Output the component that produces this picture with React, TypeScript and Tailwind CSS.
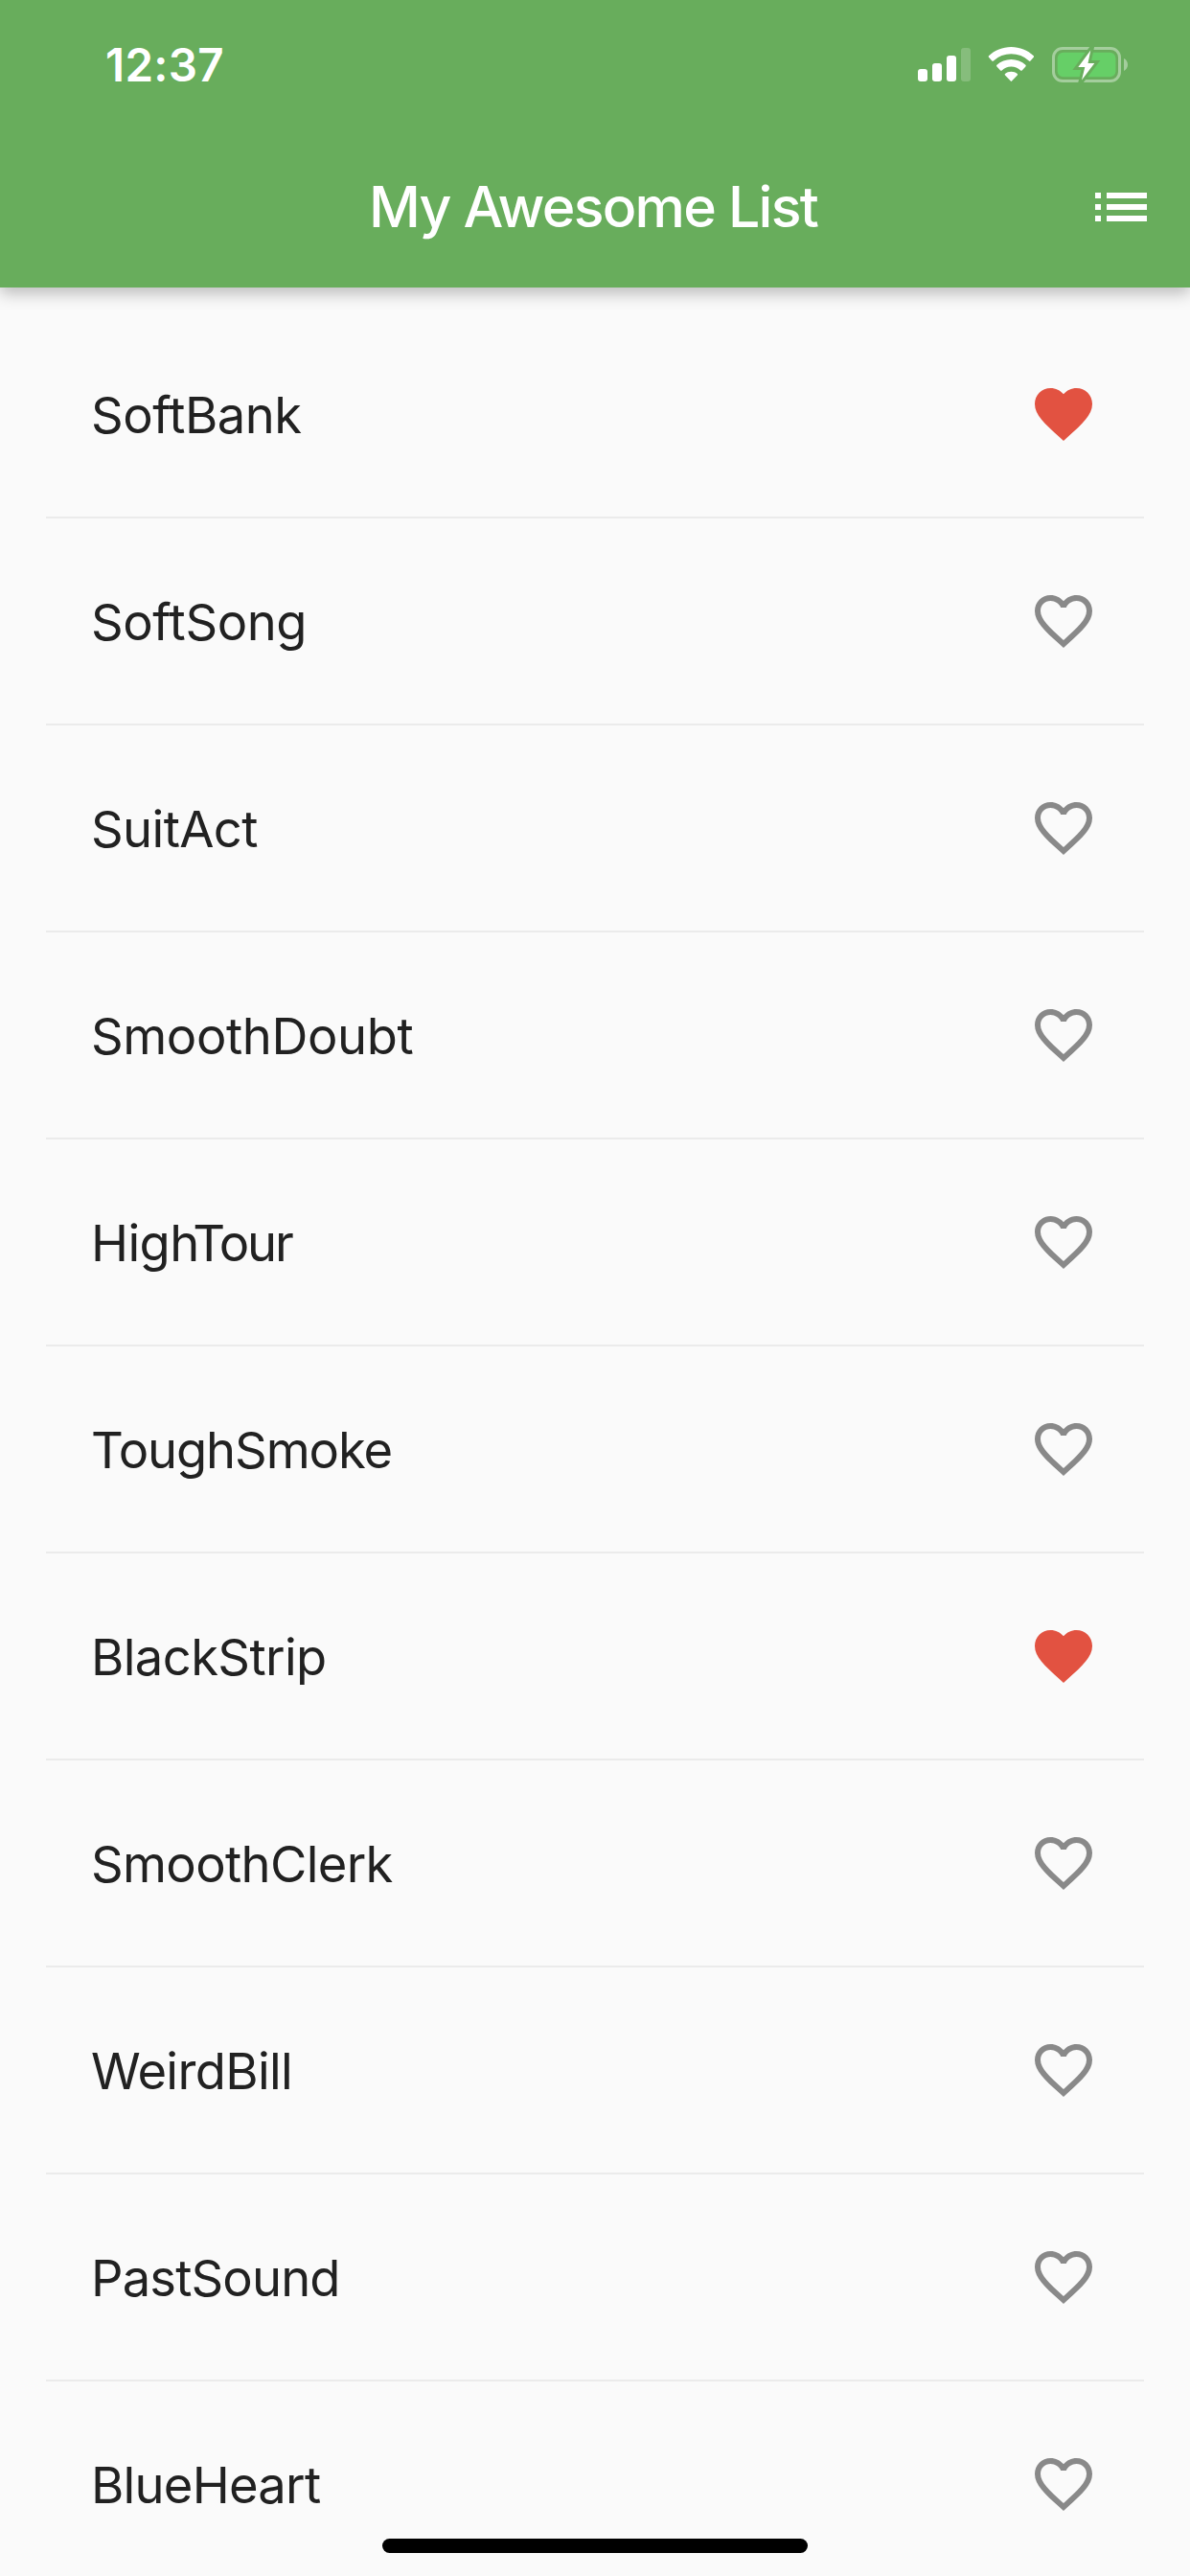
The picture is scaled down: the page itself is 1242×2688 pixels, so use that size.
import type { ReactNode } from "react";

type Item = { name: string; tracking: string; label?: ReactNode; liked?: boolean };

const items: Item[] = [
  { name: "SoftBank", tracking: "tracking-[-0.5px]", liked: true },
  { name: "SoftSong", tracking: "tracking-[-0.4px]" },
  { name: "SuitAct", tracking: "tracking-[-0.6px]" },
  { name: "SmoothDoubt", tracking: "tracking-[-0.4px]" },
  {
    name: "HighTour",
    tracking: "tracking-[-0.6px]",
    label: (
      <>
        Hig<span className="tracking-[-7px]">h</span>
        <span className="tracking-[-2.2px]">Tour</span>
      </>
    ),
  },
  { name: "ToughSmoke", tracking: "tracking-[-1.1px]" },
  { name: "BlackStrip", tracking: "tracking-[-0.6px]", liked: true },
  { name: "SmoothClerk", tracking: "tracking-[-0.65px]" },
  { name: "WeirdBill", tracking: "tracking-[-0.65px]" },
  { name: "PastSound", tracking: "tracking-[-0.85px]" },
  { name: "BlueHeart", tracking: "tracking-[-0.75px]" },
];

const heart =
  "M12 21.35l-1.45-1.32C5.4 15.36 2 12.28 2 8.5 2 5.42 4.42 3 7.5 3c1.74 0 3.41.81 4.5 2.09C13.09 3.81 14.76 3 16.5 3 19.58 3 22 5.42 22 8.5c0 3.78-3.4 6.86-8.55 11.54L12 21.35z";
const heartBorder =
  "M16.5 3c-1.74 0-3.41.81-4.5 2.09C10.91 3.81 9.24 3 7.5 3 4.42 3 2 5.42 2 8.5c0 3.78 3.4 6.86 8.55 11.54L12 21.35l1.45-1.32C18.6 15.36 22 12.28 22 8.5 22 5.42 19.58 3 16.5 3zm-4.4 15.55l-.1.1-.1-.1C7.14 14.24 4 11.39 4 8.5 4 6.5 5.5 5 7.5 5c1.54 0 3.04.99 3.57 2.36h1.87C13.46 5.99 14.96 5 16.5 5c2 0 3.5 1.5 3.5 3.5 0 2.89-3.14 5.74-7.9 10.05z";

// Signal, Wi-Fi and charging battery
function StatusIcons() {
  return (
    <svg className="h-[44px] w-[226px]" viewBox="954 46 226 44" fill="none">
      <g fill="#fff">
        <rect x="958" y="72" width="10" height="13" rx="3" />
        <rect x="973" y="66" width="10" height="19" rx="3" />
        <rect x="988" y="58" width="10" height="27" rx="3" />
        <rect x="1003" y="50" width="10" height="35" rx="3" opacity=".2" />
        <path d="M1055.400 49c9 0 17.200 3.500 23.400 9.200q.8.800 0 1.600l-3.300 3.700q-.8.800-1.600 0a27 27 0 0 0-37 0q-.8.800-1.600 0l-3.300-3.700q-.8-.8 0-1.600c6.200-5.700 14.400-9.200 23.400-9.200z" />
        <path d="M1055.400 62c5.700 0 11 2.200 15 5.800q.8.800 0 1.600l-3.700 4q-.8.800-1.600 0a14.300 14.300 0 0 0-19.400 0q-.8.800-1.600 0l-3.700-4q-.8-.8 0-1.600c4-3.600 9.300-5.800 15-5.800z" />
        <path d="M1055.400 74.700c2.400 0 4.700.9 6.400 2.300q.8.800 0 1.600l-5.800 6q-.6.600-1.200 0l-5.800-6q-.8-.8 0-1.600c1.700-1.400 4-2.300 6.400-2.300z" />
      </g>
      <rect x="1099.500" y="50.500" width="69" height="34" rx="9.500" stroke="#fff" strokeOpacity=".4" strokeWidth="3" />
      <rect x="1103.700" y="54.700" width="60.700" height="25.600" rx="6" fill="#66cf67" />
      <path d="M1173 61v13c5.300-2.300 5.300-10.700 0-13z" fill="#fff" opacity=".4" />
      <path
        d="M1138.300 52.500l-13 17.500h7l-3.300 13.500 13.300-17.500h-6.800z"
        fill="#fff"
        stroke="#68ad5c"
        strokeWidth="6"
        strokeMiterlimit="6"
        paintOrder="stroke"
      />
    </svg>
  );
}

export default function App() {
  return (
    <div className="relative h-[2688px] w-[1242px] overflow-hidden bg-[#fafafa] font-[Inter,sans-serif] text-[#212121]">
      <header className="relative z-10 h-[300px] bg-[#68ad5c] text-white shadow-[0_6px_16px_rgba(0,0,0,0.26)]">
        <div className="flex h-[136px] items-center justify-between pl-[110px] pr-[62px]">
          <span className="text-[47.5px] font-semibold tracking-[0.3px]">12:37</span>
          <StatusIcons />
        </div>
        <div className="relative flex h-[164px] items-center justify-center pb-1 pr-1">
          <h1 className="text-[59px] font-medium tracking-[-1.77px]">My Awesome List</h1>
          <svg className="absolute right-[36px] top-[44px] size-[72px]" viewBox="0 0 24 24" fill="#fff">
            <path d="M3 13h2v-2H3v2zm0 4h2v-2H3v2zm0-8h2V7H3v2zm4 4h14v-2H7v2zm0 4h14v-2H7v2zM7 7v2h14V7H7z" />
          </svg>
        </div>
      </header>
      <ul className="px-12 pt-[25px]">
        {items.map((item) => (
          <li
            key={item.name}
            className="flex h-[216px] items-center justify-between border-b-2 border-[#ebebeb] pl-[47px] pr-12"
          >
            <span className={`pt-0.5 text-[52.5px] ${item.tracking}`}>{item.label ?? item.name}</span>
            <svg className="size-[72px]" viewBox="0 0 24 24" fill={item.liked ? "#e25241" : "#898989"}>
              <path d={item.liked ? heart : heartBorder} />
            </svg>
          </li>
        ))}
      </ul>
      <div className="absolute bottom-6 left-1/2 h-[15px] w-[444px] -translate-x-1/2 rounded-full bg-black" />
    </div>
  );
}
